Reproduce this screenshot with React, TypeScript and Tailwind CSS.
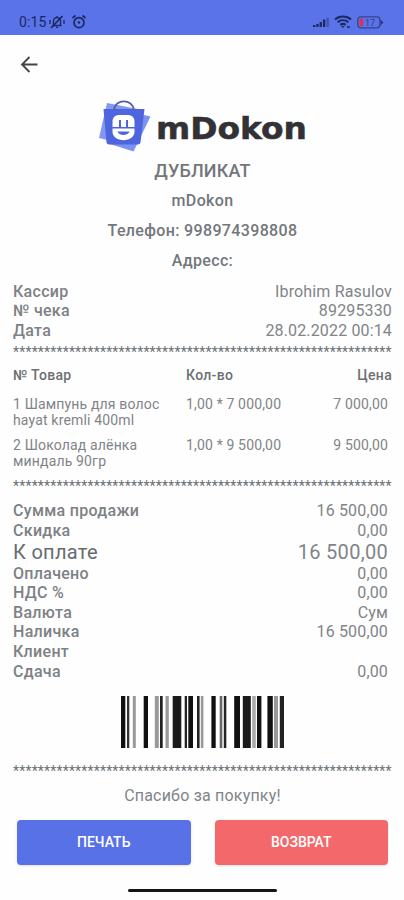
import React from 'react';

interface Row {
  label: string;
  value: string;
  large?: boolean;
}

interface Product {
  name: string[];
  qty: string;
  price: string;
}

const info: Row[] = [
  { label: 'Кассир', value: 'Ibrohim Rasulov' },
  { label: '№ чека', value: '89295330' },
  { label: 'Дата', value: '28.02.2022 00:14' },
];

const products: Product[] = [
  { name: ['1 Шампунь для волос', 'hayat kremli 400ml'], qty: '1,00 * 7 000,00', price: '7 000,00' },
  { name: ['2 Шоколад алёнка', 'миндаль 90гр'], qty: '1,00 * 9 500,00', price: '9 500,00' },
];

const totals: Row[] = [
  { label: 'Сумма продажи', value: '16 500,00' },
  { label: 'Скидка', value: '0,00' },
  { label: 'К оплате', value: '16 500,00', large: true },
  { label: 'Оплачено', value: '0,00' },
  { label: 'НДС %', value: '0,00' },
  { label: 'Валюта', value: 'Сум' },
  { label: 'Наличка', value: '16 500,00' },
  { label: 'Клиент', value: '' },
  { label: 'Сдача', value: '0,00' },
];

// [x, width, color]
const bars: [number, number, string][] = [
  [0, 4.3, '#111'], [6, 2.3, '#333'], [11.8, 3, '#999'], [22.7, 4.3, '#111'],
  [33.8, 4, '#999'], [39, 2.7, '#222'], [44.5, 3.3, '#999'], [51.7, 8.6, '#1a1a1a'],
  [63.7, 2.3, '#222'], [67.3, 4.7, '#111'], [76, 2.6, '#222'], [79.8, 2.6, '#999'],
  [90.4, 4.3, '#111'], [98.7, 2.6, '#666'], [102.8, 2.5, '#222'], [113.2, 5.8, '#111'],
  [121.8, 8, '#1a1a1a'], [131.2, 3.6, '#aaa'], [136, 4.4, '#111'], [146.4, 5.4, '#111'],
  [153, 4, '#999'], [158.8, 4.2, '#222'],
];

const StatusBar = () => (
  <div className="h-[35px] shrink-0 bg-[#5a73e8] flex items-start justify-between pl-[19px] pr-[20px] pt-[14px] text-[#1d2860]">
    <div className="flex items-center h-4">
      <span className="w-[30px] text-[14px] leading-4 tracking-[0.1px]">0:15</span>
      <svg className="w-4 h-4" viewBox="0 0 16 16" fill="none" stroke="currentColor" strokeWidth="1.3">
        <path d="M3.5 11.5h9M4.5 11V7a3.5 3.5 0 0 1 7 0v4M7 13.3h2M8 2v1.5M1 6v4M15 6v4" />
        <path d="M2 14 13.5 2" strokeWidth="1.8" />
      </svg>
      <svg className="w-4 h-4 ml-[6px]" viewBox="0 0 16 16" fill="none" stroke="currentColor" strokeWidth="1.7">
        <circle cx="8" cy="8.7" r="5" />
        <path d="m1.5 4 3-2.5M14.5 4l-3-2.5" />
        <circle cx="8" cy="8.5" r="1.2" fill="currentColor" stroke="none" />
      </svg>
    </div>
    <div className="flex items-center h-4">
      <svg className="w-[18px] h-3" viewBox="0 0 18 12" fill="currentColor">
        <path d="M1 9h2.3v2H1zM4.3 8h2.3v3H4.3zM7.6 6h2.3v5H7.6zM11 3.5h2.3V11H11z" />
        <path d="M14.5 1.5h2.3V11h-2.3z" opacity=".4" />
      </svg>
      <svg className="w-[18px] h-[14px] ml-[4px]" viewBox="0 0 18 14" fill="none" stroke="currentColor" strokeWidth="2.1">
        <path d="M1 4.5c4.5-4 11.5-4 16 0M3.6 7.3c3.2-2.7 7.6-2.7 10.8 0M6.3 9.9c1.7-1.3 3.7-1.3 5.4 0" />
        <path d="M7 11h3.5L9 13z" fill="currentColor" stroke="none" />
        <path d="M13 12h3" strokeWidth="1.5" />
      </svg>
      <svg className="w-[27px] h-[13px] ml-[5px]" viewBox="0 0 27 13">
        <rect x=".8" y=".8" width="22" height="11" rx="2.8" fill="none" stroke="#35438f" strokeWidth="1.3" />
        <path d="M23.5 3.5 26.5 6.5l-3 3z" fill="#27357d" />
        <rect x="2.5" y="2.5" width="3.7" height="7.8" rx="1" fill="#dc3058" />
        <text x="8" y="9.8" fontSize="9" fill="#303e88">17</text>
      </svg>
    </div>
  </div>
);

const Logo = () => (
  <div className="h-[60px] flex justify-center items-start">
    <svg className="w-[210px] h-[60px]" viewBox="0 0 210 60">
      <path d="M9 5 45 12 37 49 1 40z" fill="#8298f2" />
      <path d="M46 17 52.5 18.5 35.5 53.5 9 45z" fill="#7a92f4" />
      <path d="M5.5 11h41l-4 33.5a2.5 2.5 0 0 1-2.5 2H11a2.5 2.5 0 0 1-2.5-2z" fill="#4f65de" />
      <path d="M16 12c1-11.5 18.5-11.5 20 0" fill="none" stroke="#5560ac" strokeWidth="1.8" />
      <path d="M14.5 29v-6a6 6 0 0 1 6-6h10a6 6 0 0 1 6 6v6z" fill="#fff" />
      <path d="M22 29v-7M29 29v-7" fill="none" stroke="#4f65de" strokeWidth="2" />
      <path d="M14.5 30.5h22v3c0 11.5-22 11.5-22 0z" fill="#fff" />
      <path d="M19.5 33.5h12c-1 4.5-11 4.5-12 0z" fill="#4f65de" />
      <text x="58" y="41" textLength="151" lengthAdjust="spacingAndGlyphs" fontFamily="DejaVu Sans, sans-serif" fontSize="30" fontWeight="700" fill="#323236" stroke="#323236" strokeWidth=".5">mDokon</text>
    </svg>
  </div>
);

const Stars = () => (
  <div className="h-5 whitespace-nowrap text-[14px] leading-5 tracking-[0.18px] text-[#6c7074]">
    {'*'.repeat(61)}
  </div>
);

const InfoRow: React.FC<{ row: Row }> = ({ row }) => (
  <div className={`flex justify-between items-center ${row.large ? 'h-[23px] text-[20px] tracking-[0.3px]' : 'h-[19.6px] text-[16px]'}`}>
    <span className={row.large ? 'text-[#676b70]' : 'font-medium tracking-[0.3px] text-[#7d8185]'}>{row.label}</span>
    <span className={row.large ? 'text-[#808488]' : 'tracking-[0.15px] text-[#808488]'}>{row.value}</span>
  </div>
);

export default function App() {
  return (
    <div className="w-full h-[900px] overflow-hidden bg-[#fefefe] flex flex-col font-[Roboto,sans-serif] text-[#777b80]">
      <StatusBar />
      <header className="h-[63px] shrink-0 pl-[20px] pt-[20px]">
        <svg className="w-[19px] h-[19px]" viewBox="0 0 19 19" fill="none" stroke="#444" strokeWidth="1.8">
          <path d="M17.5 9.5H2M9.5 2 2 9.5 9.5 17" />
        </svg>
      </header>

      <main className="pl-[13px] pr-[12px] flex flex-col">
        <Logo />
        <div className="flex flex-col items-center font-medium text-[16px] leading-[30px] tracking-[0.35px] text-[#73777b]">
          <h1 className="text-[18px] leading-[26px] tracking-[0.2px]">ДУБЛИКАТ</h1>
          <p className="mt-[2px]">mDokon</p>
          <p>Телефон: 998974398808</p>
          <p>Адресс:</p>
        </div>

        <div className="mt-[5.8px]">
          {info.map((row) => <InfoRow key={row.label} row={row} />)}
        </div>
        <div className="mt-[1.2px]"><Stars /></div>

        <div className="grid grid-cols-[173px_1fr_auto] h-[28px] items-center text-[14px] font-medium tracking-[0.3px] text-[#6c7074]">
          <span>№ Товар</span>
          <span>Кол-во</span>
          <span>Цена</span>
        </div>
        {products.map((product) => (
          <div key={product.price} className="grid grid-cols-[173px_1fr_auto] h-[41px] pt-[6px] pr-[4px] text-[14px] leading-4 tracking-[0.16px] text-[#808488]">
            <span>
              {product.name.map((line) => <span key={line} className="block whitespace-nowrap">{line}</span>)}
            </span>
            <span>{product.qty}</span>
            <span>{product.price}</span>
          </div>
        ))}
        <div className="mt-[4px]"><Stars /></div>

        <div className="mt-[5.8px] pr-[4px]">
          {totals.map((row) => <InfoRow key={row.label} row={row} />)}
        </div>

        <svg className="w-[164px] h-[52px] ml-[108px] mt-[14.5px]" viewBox="0 0 164 52">
          {bars.map(([x, width, color]) => <rect key={x} x={x} y="0" width={width} height="52" fill={color} />)}
        </svg>
        <div className="mt-[13px]"><Stars /></div>
        <p className="text-center text-[16px] leading-5 mt-[5px] tracking-[0.2px] text-[#808488]">Спасибо за покупку!</p>
      </main>

      <div className="grid grid-cols-2 gap-[24px] pl-[17px] pr-[16px] mt-[14px] text-white text-[14px] font-medium">
        <button className="h-[45px] rounded-[4px] bg-[#5871e6] shadow-sm">ПЕЧАТЬ</button>
        <button className="h-[45px] rounded-[4px] bg-[#f3686a] shadow-sm">ВОЗВРАТ</button>
      </div>
      <div className="mt-[24px] mx-auto w-[149px] h-[3px] rounded-full bg-[#151515]" />
    </div>
  );
}
